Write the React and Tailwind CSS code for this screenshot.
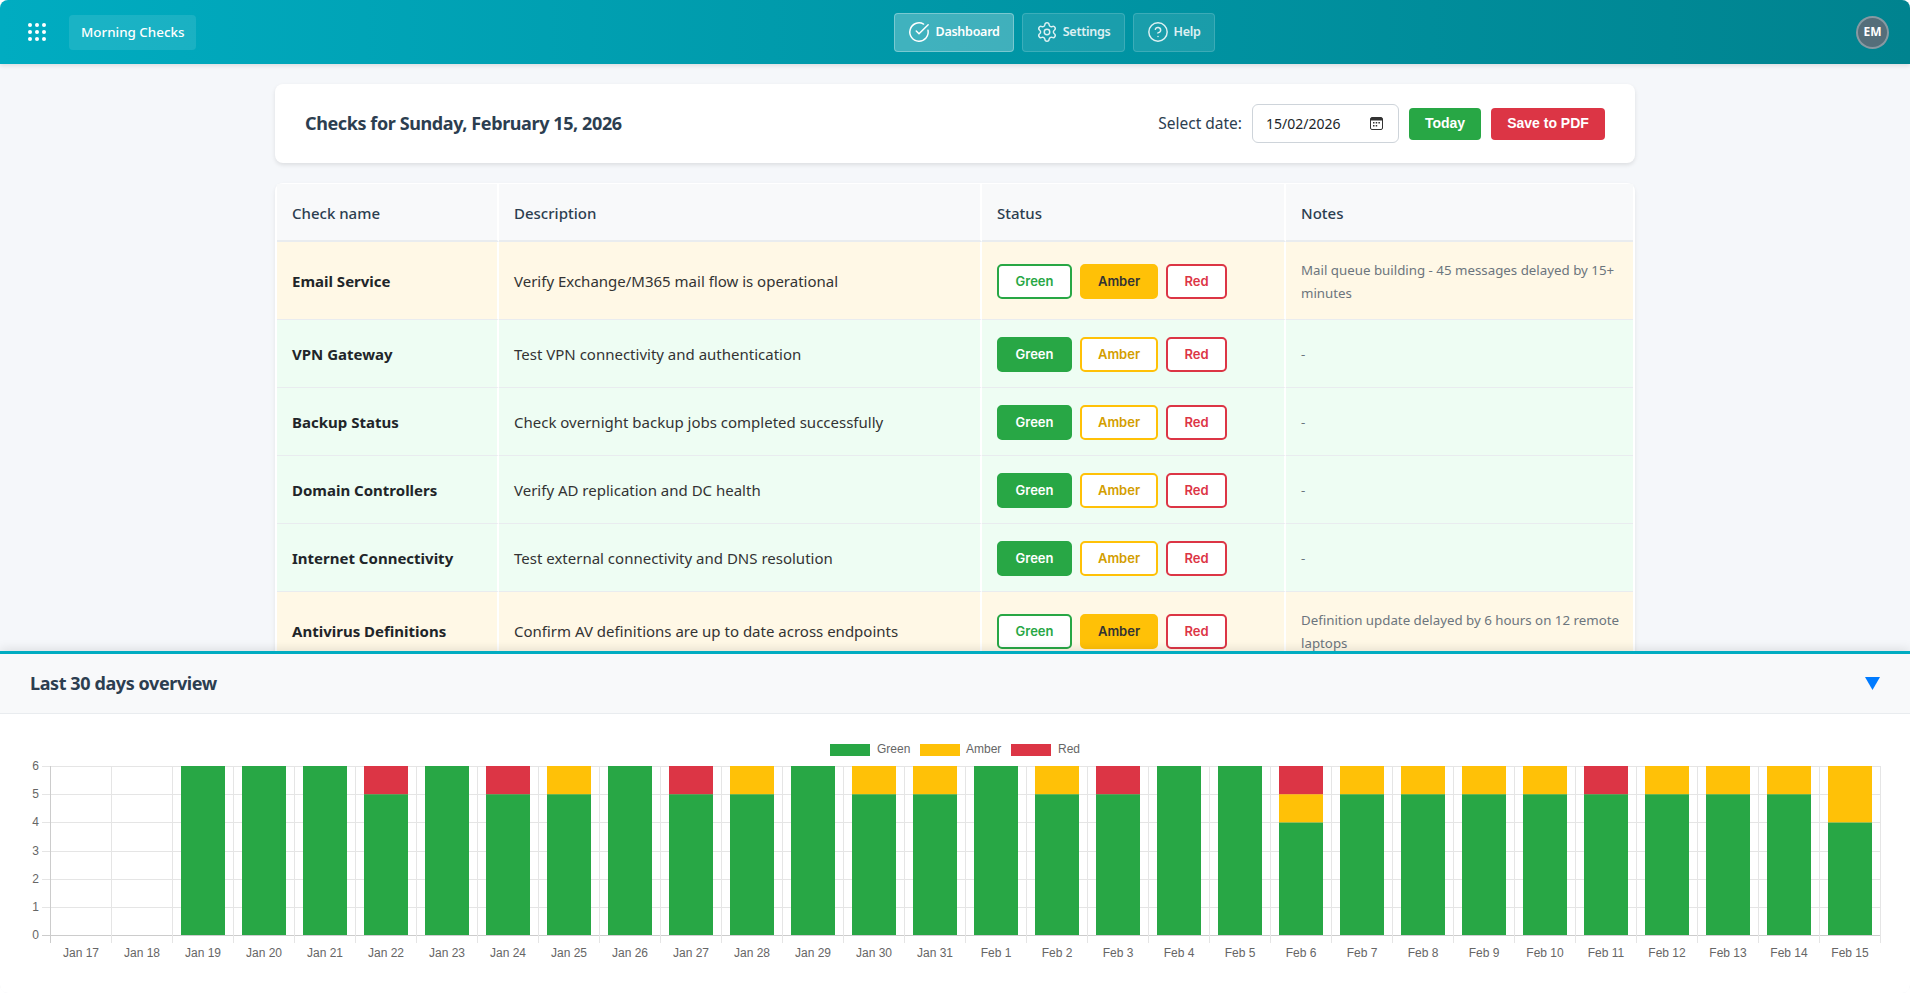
import React from 'react';
import { CircleCheckBig, Settings, CircleHelp } from 'lucide-react';

const UI_FONT = 'font-["Noto_Sans",sans-serif]';

const CHECKS = [
  { name: 'Email Service', desc: 'Verify Exchange/M365 mail flow is operational', status: 'amber', notes: 'Mail queue building - 45 messages delayed by 15+ minutes', tall: true },
  { name: 'VPN Gateway', desc: 'Test VPN connectivity and authentication', status: 'green', notes: '-' },
  { name: 'Backup Status', desc: 'Check overnight backup jobs completed successfully', status: 'green', notes: '-' },
  { name: 'Domain Controllers', desc: 'Verify AD replication and DC health', status: 'green', notes: '-' },
  { name: 'Internet Connectivity', desc: 'Test external connectivity and DNS resolution', status: 'green', notes: '-' },
  { name: 'Antivirus Definitions', desc: 'Confirm AV definitions are up to date across endpoints', status: 'amber', notes: 'Definition update delayed by 6 hours on 12 remote laptops', tall: true },
];

// green, amber, red per day
const DAYS = [
  ['Jan 17', 0, 0, 0], ['Jan 18', 0, 0, 0], ['Jan 19', 6, 0, 0], ['Jan 20', 6, 0, 0], ['Jan 21', 6, 0, 0],
  ['Jan 22', 5, 0, 1], ['Jan 23', 6, 0, 0], ['Jan 24', 5, 0, 1], ['Jan 25', 5, 1, 0], ['Jan 26', 6, 0, 0],
  ['Jan 27', 5, 0, 1], ['Jan 28', 5, 1, 0], ['Jan 29', 6, 0, 0], ['Jan 30', 5, 1, 0], ['Jan 31', 5, 1, 0],
  ['Feb 1', 6, 0, 0], ['Feb 2', 5, 1, 0], ['Feb 3', 5, 0, 1], ['Feb 4', 6, 0, 0], ['Feb 5', 6, 0, 0],
  ['Feb 6', 4, 1, 1], ['Feb 7', 5, 1, 0], ['Feb 8', 5, 1, 0], ['Feb 9', 5, 1, 0], ['Feb 10', 5, 1, 0],
  ['Feb 11', 5, 0, 1], ['Feb 12', 5, 1, 0], ['Feb 13', 5, 1, 0], ['Feb 14', 5, 1, 0], ['Feb 15', 4, 2, 0],
];

const GREEN = '#28a745';
const AMBER = '#ffc107';
const RED = '#dc3545';

const GridDots = () => (
  <svg width="18" height="18" viewBox="0 0 18 18" fill="white">
    {[2, 9, 16].map(y => [2, 9, 16].map(x => <circle key={`${x}-${y}`} cx={x} cy={y} r="2" />))}
  </svg>
);

const CalendarIcon = () => (
  <svg width="13" height="13" viewBox="0 0 13 13" fill="none">
    <rect x="0.5" y="0.5" width="12" height="12" rx="1.5" stroke="#333" />
    <rect x="1" y="1" width="11" height="2.5" fill="#333" />
    <rect x="3" y="5" width="1.5" height="1.5" fill="#333" />
    <rect x="5.7" y="5" width="1.5" height="1.5" fill="#333" />
    <rect x="8.4" y="5" width="1.5" height="1.5" fill="#333" />
    <rect x="3" y="8" width="1.5" height="1.5" fill="#333" />
    <rect x="5.7" y="8" width="1.5" height="1.5" fill="#333" />
  </svg>
);

const NavButton = ({ icon: Icon, label, active }) => (
  <button className={`h-[39px] flex items-center gap-[5px] px-[13px] rounded border text-[12.5px] font-semibold tracking-[-0.25px] ${active ? 'bg-white/25 border-white/30 text-white' : 'bg-white/10 border-white/15 text-white/85'}`}>
    <Icon size={22} strokeWidth={1.6} />
    {label}
  </button>
);

const StatusButton = ({ label, selected, kind }) => {
  const styles = {
    green: selected ? 'w-[75px] bg-[#28a745] border-[#28a745] text-white' : 'w-[75px] bg-white border-[#28a745] text-[#28a745]',
    amber: selected ? 'w-[78px] bg-[#ffc107] border-[#ffc107] text-[#333333]' : 'w-[78px] bg-white border-[#ffc107] text-[#d39e00]',
    red: selected ? 'w-[61px] bg-[#dc3545] border-[#dc3545] text-white' : 'w-[61px] bg-white border-[#dc3545] text-[#dc3545]',
  };
  return (
    <button className={`h-[35px] rounded-[5px] border-2 text-[13px] font-semibold font-["Inter",sans-serif] ${styles[kind]}`}>
      {label}
    </button>
  );
};

const CheckRow = ({ check }) => {
  const bg = check.status === 'amber' ? 'bg-[#fff8e6]' : 'bg-[#eefdf3]';
  const cell = `${bg} border-r-2 border-b border-r-white border-b-[#e9ecef] px-[15px] pt-[2px] align-middle`;
  return (
    <tr className={check.tall ? 'h-[78px]' : 'h-[68px]'}>
      <td className={`${cell} font-bold text-[15px] text-[#212529]`}>{check.name}</td>
      <td className={`${cell} text-[15px] text-[#333333]`}>{check.desc}</td>
      <td className={cell}>
        <div className="flex gap-2">
          <StatusButton kind="green" label="Green" selected={check.status === 'green'} />
          <StatusButton kind="amber" label="Amber" selected={check.status === 'amber'} />
          <StatusButton kind="red" label="Red" selected={check.status === 'red'} />
        </div>
      </td>
      <td className={`${bg} border-b border-b-[#e9ecef] pl-[15px] pr-[10px] pt-[2px] align-middle text-[13.3px] leading-[23px] text-[#6c757d]`}>{check.notes}</td>
    </tr>
  );
};

const ChecksTable = () => (
  <div className="bg-white rounded-lg shadow-[0_2px_4px_rgba(0,0,0,0.08)] px-[2px] pt-px">
    <table className="w-full table-fixed border-separate border-spacing-0">
      <colgroup>
        <col className="w-[222px]" />
        <col className="w-[483px]" />
        <col className="w-[304px]" />
        <col />
      </colgroup>
      <thead>
        <tr className="h-[58px] text-left text-[15px] text-[#2c3e50]">
          {['Check name', 'Description', 'Status'].map(h => (
            <th key={h} className="bg-[#f8f9fa] border-r-2 border-b-2 border-r-white border-b-[#e9ecef] px-[15px] pt-[2px] font-medium">{h}</th>
          ))}
          <th className="bg-[#f8f9fa] border-b-2 border-b-[#e9ecef] px-[15px] pt-[2px] font-medium">Notes</th>
        </tr>
      </thead>
      <tbody>
        {CHECKS.map(c => <CheckRow key={c.name} check={c} />)}
      </tbody>
    </table>
  </div>
);

const CHART = { left: 50, top: 766, bottom: 935, right: 1880, slot: 61, barW: 44 };
const unit = (CHART.bottom - CHART.top) / 6;

const OverviewChart = () => (
  <svg width="1910" height="279" viewBox="0 714 1910 279" className="block" fontFamily="'Liberation Sans', Arial, sans-serif" fontSize="12" fill="#666666">
    {[[830, GREEN, 877, 'Green'], [920, AMBER, 966, 'Amber'], [1011, RED, 1058, 'Red']].map(([x, color, tx, label]) => (
      <g key={label}>
        <rect x={x} y="744" width="40" height="12" fill={color} />
        <text x={tx} y="753">{label}</text>
      </g>
    ))}
    <g shapeRendering="crispEdges">
      {[0, 1, 2, 3, 4, 5, 6].map(n => {
        const y = Math.round(CHART.bottom - n * unit);
        return <line key={n} x1={CHART.left - 8} x2={CHART.right} y1={y} y2={y} stroke={n === 0 ? '#cccccc' : '#e5e5e5'} />;
      })}
      {DAYS.map((d, i) => (
        <line key={d[0]} x1={CHART.left + i * CHART.slot + 0.5} x2={CHART.left + i * CHART.slot + 0.5} y1={CHART.top} y2={CHART.bottom + 8} stroke={i === 0 ? '#cccccc' : '#e5e5e5'} />
      ))}
      <line x1={CHART.right + 0.5} x2={CHART.right + 0.5} y1={CHART.top} y2={CHART.bottom + 8} stroke="#e5e5e5" />
    </g>
    {[0, 1, 2, 3, 4, 5, 6].map(n => (
      <text key={n} x="39" y={CHART.bottom - n * unit + 4} textAnchor="end">{n}</text>
    ))}
    {DAYS.map(([label, g, a, r], i) => {
      const x = CHART.left + i * CHART.slot + 9;
      const hG = g * unit;
      const hA = a * unit;
      const hR = r * unit;
      return (
        <g key={label}>
          {g > 0 && <rect x={x} y={CHART.bottom - hG} width={CHART.barW} height={hG} fill={GREEN} />}
          {a > 0 && <rect x={x} y={CHART.bottom - hG - hA} width={CHART.barW} height={hA} fill={AMBER} />}
          {r > 0 && <rect x={x} y={CHART.bottom - hG - hA - hR} width={CHART.barW} height={hR} fill={RED} />}
          <text x={x + CHART.barW / 2} y="957" textAnchor="middle">{label}</text>
        </g>
      );
    })}
  </svg>
);

export default function App() {
  return (
    <div className={`h-screen flex flex-col overflow-hidden bg-[#f5f7fa] rounded-lg ${UI_FONT}`}>
      <header className="relative z-10 h-[64px] shrink-0 flex items-center pl-[28px] pr-[21px] bg-gradient-to-r from-[#00acc1] via-[#0097a7] to-[#00838f] shadow-[0_2px_4px_rgba(0,0,0,0.1)]">
        <GridDots />
        <div className="ml-[23px] h-[35px] flex items-center px-3 rounded bg-white/10 text-white text-[13.4px] font-medium">Morning Checks</div>
        <nav className="ml-[698px] flex gap-2">
          <NavButton icon={CircleCheckBig} label="Dashboard" active />
          <NavButton icon={Settings} label="Settings" />
          <NavButton icon={CircleHelp} label="Help" />
        </nav>
        <div className="ml-auto w-[33px] h-[33px] rounded-full border-2 border-white/30 bg-[#546e7a] flex items-center justify-center text-white text-[12px] font-bold">EM</div>
      </header>

      <main className="flex-1 min-h-0 overflow-hidden">
        <div className="mx-auto w-[1360px] pt-[20px] flex flex-col gap-[20px]">
          <div className="h-[79px] bg-white rounded-lg shadow-[0_2px_4px_rgba(0,0,0,0.1)] px-[30px] flex items-center">
            <h1 className="text-[18px] font-bold tracking-[-0.4px] text-[#2c3e50]">Checks for Sunday, February 15, 2026</h1>
            <span className="ml-auto text-[15.5px] text-[#2c3e50]">Select date:</span>
            <div className="ml-[10px] w-[147px] h-[39px] rounded-md border border-[#ced4da] pl-[13px] pr-[15px] flex items-center justify-between text-[14px] text-[#212529]">
              15/02/2026
              <CalendarIcon />
            </div>
            <button className='ml-[10px] w-[72px] h-[32px] rounded bg-[#28a745] text-white text-[14px] font-bold font-["Liberation_Sans",sans-serif]'>Today</button>
            <button className='ml-[10px] w-[114px] h-[32px] rounded bg-[#dc3545] text-white text-[14px] font-bold font-["Liberation_Sans",sans-serif]'>Save to PDF</button>
          </div>
          <ChecksTable />
        </div>
      </main>

      <section className="relative z-10 h-[342px] shrink-0 bg-white border-t-[3px] border-[#00acc1] shadow-[0_-2px_10px_rgba(0,0,0,0.1)]">
        <div className="h-[60px] bg-[#f8f9fa] border-b border-[#e9ecef] pl-[30px] pr-[30px] flex items-center justify-between">
          <h2 className="text-[18px] font-bold tracking-[-0.4px] text-[#2c3e50]">Last 30 days overview</h2>
          <svg width="15" height="13" viewBox="0 0 15 13"><polygon points="0,0 15,0 7.5,13" fill="#007bff" /></svg>
        </div>
        <OverviewChart />
      </section>
    </div>
  );
}
